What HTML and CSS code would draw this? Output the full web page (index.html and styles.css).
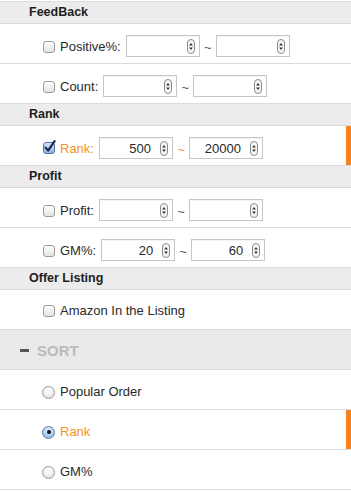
FILE: index.html
```html
<!DOCTYPE html>
<html>
<head>
<meta charset="utf-8">
<link rel="stylesheet" href="styles.css">
</head>
<body>
<div class="panel">
  <div class="sec-head">FeedBack</div>
  <div class="row has-inputs">
    <span class="cb"></span><span class="lbl">Positive%:</span>
    <div class="range">
      <div class="num"><span class="val"></span><span class="spin"><svg viewBox="0 0 8 15" width="8" height="15"><rect x="0.5" y="0.5" width="7" height="14" rx="3.5" fill="#f6f6f6" stroke="#8a8a8a"/><path d="M2.1 6.4H5.9L4 3.9Z M2.1 8.6H5.9L4 11.1Z" fill="#333"/></svg></span></div>
      <span class="tilde">~</span>
      <div class="num"><span class="val"></span><span class="spin"><svg viewBox="0 0 8 15" width="8" height="15"><rect x="0.5" y="0.5" width="7" height="14" rx="3.5" fill="#f6f6f6" stroke="#8a8a8a"/><path d="M2.1 6.4H5.9L4 3.9Z M2.1 8.6H5.9L4 11.1Z" fill="#333"/></svg></span></div>
    </div>
  </div>
  <div class="row has-inputs">
    <span class="cb"></span><span class="lbl">Count:</span>
    <div class="range">
      <div class="num"><span class="val"></span><span class="spin"><svg viewBox="0 0 8 15" width="8" height="15"><rect x="0.5" y="0.5" width="7" height="14" rx="3.5" fill="#f6f6f6" stroke="#8a8a8a"/><path d="M2.1 6.4H5.9L4 3.9Z M2.1 8.6H5.9L4 11.1Z" fill="#333"/></svg></span></div>
      <span class="tilde">~</span>
      <div class="num"><span class="val"></span><span class="spin"><svg viewBox="0 0 8 15" width="8" height="15"><rect x="0.5" y="0.5" width="7" height="14" rx="3.5" fill="#f6f6f6" stroke="#8a8a8a"/><path d="M2.1 6.4H5.9L4 3.9Z M2.1 8.6H5.9L4 11.1Z" fill="#333"/></svg></span></div>
    </div>
  </div>

  <div class="sec-head">Rank</div>
  <div class="row has-inputs active">
    <span class="cb checked"><svg viewBox="0 0 14 14" width="14" height="14"><defs><linearGradient id="cbg" x1="0" y1="0" x2="0" y2="1"><stop offset="0" stop-color="#d9e6f7"/><stop offset="1" stop-color="#8fb3e3"/></linearGradient></defs><rect x="1.5" y="2.5" width="11" height="11" rx="2.5" fill="url(#cbg)" stroke="#56719b"/><path d="M3.6 7.6L6.1 10.6L12.6 1.2" fill="none" stroke="#1b2a5c" stroke-width="2.2" stroke-linecap="round" stroke-linejoin="round"/></svg></span><span class="lbl">Rank:</span>
    <div class="range">
      <div class="num"><span class="val">500</span><span class="spin"><svg viewBox="0 0 8 15" width="8" height="15"><rect x="0.5" y="0.5" width="7" height="14" rx="3.5" fill="#f6f6f6" stroke="#8a8a8a"/><path d="M2.1 6.4H5.9L4 3.9Z M2.1 8.6H5.9L4 11.1Z" fill="#333"/></svg></span></div>
      <span class="tilde">~</span>
      <div class="num"><span class="val">20000</span><span class="spin"><svg viewBox="0 0 8 15" width="8" height="15"><rect x="0.5" y="0.5" width="7" height="14" rx="3.5" fill="#f6f6f6" stroke="#8a8a8a"/><path d="M2.1 6.4H5.9L4 3.9Z M2.1 8.6H5.9L4 11.1Z" fill="#333"/></svg></span></div>
    </div>
  </div>

  <div class="sec-head">Profit</div>
  <div class="row has-inputs">
    <span class="cb"></span><span class="lbl">Profit:</span>
    <div class="range">
      <div class="num"><span class="val"></span><span class="spin"><svg viewBox="0 0 8 15" width="8" height="15"><rect x="0.5" y="0.5" width="7" height="14" rx="3.5" fill="#f6f6f6" stroke="#8a8a8a"/><path d="M2.1 6.4H5.9L4 3.9Z M2.1 8.6H5.9L4 11.1Z" fill="#333"/></svg></span></div>
      <span class="tilde">~</span>
      <div class="num"><span class="val"></span><span class="spin"><svg viewBox="0 0 8 15" width="8" height="15"><rect x="0.5" y="0.5" width="7" height="14" rx="3.5" fill="#f6f6f6" stroke="#8a8a8a"/><path d="M2.1 6.4H5.9L4 3.9Z M2.1 8.6H5.9L4 11.1Z" fill="#333"/></svg></span></div>
    </div>
  </div>
  <div class="row has-inputs">
    <span class="cb"></span><span class="lbl">GM%:</span>
    <div class="range">
      <div class="num"><span class="val">20</span><span class="spin"><svg viewBox="0 0 8 15" width="8" height="15"><rect x="0.5" y="0.5" width="7" height="14" rx="3.5" fill="#f6f6f6" stroke="#8a8a8a"/><path d="M2.1 6.4H5.9L4 3.9Z M2.1 8.6H5.9L4 11.1Z" fill="#333"/></svg></span></div>
      <span class="tilde">~</span>
      <div class="num"><span class="val">60</span><span class="spin"><svg viewBox="0 0 8 15" width="8" height="15"><rect x="0.5" y="0.5" width="7" height="14" rx="3.5" fill="#f6f6f6" stroke="#8a8a8a"/><path d="M2.1 6.4H5.9L4 3.9Z M2.1 8.6H5.9L4 11.1Z" fill="#333"/></svg></span></div>
    </div>
  </div>

  <div class="sec-head">Offer Listing</div>
  <div class="row plain">
    <span class="cb"></span><span class="lbl">Amazon In the Listing</span>
  </div>

  <div class="sort-head"><span class="minus"></span><span class="sort-title">SORT</span></div>
  <div class="row radio-row">
    <span class="radio"></span><span class="lbl">Popular Order</span>
  </div>
  <div class="row radio-row active">
    <span class="radio on"></span><span class="lbl">Rank</span>
  </div>
  <div class="row radio-row">
    <span class="radio"></span><span class="lbl">GM%</span>
  </div>
</div>
</body>
</html>
```

FILE: styles.css
```css
html, body {
  margin: 0;
  padding: 0;
  background: #ffffff;
}
body {
  font-family: "Liberation Sans", Arial, Helvetica, sans-serif;
  font-size: 13px;
  color: #2a2a2a;
  width: 351px;
}
.panel {
  margin-top: 1px;
  border-top: 1px solid #dcdcdc;
}
.sec-head {
  height: 21px;
  line-height: 21px;
  background: #ececec;
  border-bottom: 1px solid #d9d9d9;
  padding-left: 29px;
  font-weight: bold;
  font-size: 12.5px;
  color: #1e1e1e;
}
.row {
  height: 39px;
  box-sizing: content-box;
  border-bottom: 1px solid #dcdcdc;
  display: flex;
  align-items: center;
  padding-left: 43px;
  padding-top: 0;
  background: #fff;
}
.row > * { flex: none; }
.row.has-inputs {
  height: 34px;
  padding-top: 5px;
}
.row.plain {
  height: 38px;
  padding-top: 1px;
}
.row.radio-row {
  height: 36px;
  padding-top: 3px;
}
.row.active {
  box-shadow: inset -5px 0 0 #f6831f;
}
.row.active .lbl,
.row.active .tilde {
  color: #f7931e;
}
.lbl {
  margin-left: 5px;
  white-space: nowrap;
}
.cb {
  width: 12px;
  height: 12px;
  box-sizing: border-box;
  border: 1px solid #9b9b9b;
  border-radius: 3px;
  background: linear-gradient(#ffffff, #e2e2e2);
  box-shadow: inset 0 1px 1px rgba(255,255,255,0.8);
  position: relative;
  top: 1px;
}
.cb.checked {
  border: none;
  background: none;
  box-shadow: none;
  top: 0;
}
.cb.checked svg {
  position: absolute;
  left: -1px;
  top: -2px;
}
.radio {
  width: 13px;
  height: 13px;
  box-sizing: border-box;
  border: 1px solid #9a9a9a;
  border-radius: 50%;
  background: radial-gradient(circle at 50% 30%, #ffffff 0%, #f2f2f2 45%, #d3d3d3 100%);
  position: relative;
  top: 1px;
  margin-left: -1px;
}
.radio.on {
  border-color: #5d7fb1;
  background: radial-gradient(circle at 50% 30%, #e3eefb 0%, #b5cff0 50%, #77a6e0 100%);
}
.radio.on::after {
  content: "";
  position: absolute;
  left: 3.5px;
  top: 3.5px;
  width: 4px;
  height: 4px;
  border-radius: 50%;
  background: #111;
}
.range {
  display: flex;
  align-items: center;
  margin-left: 5px;
}
.num {
  width: 74px;
  height: 22px;
  box-sizing: border-box;
  border: 1px solid #c6c6c6;
  background: #fff;
  box-shadow: inset 0 1px 1px rgba(0,0,0,0.05);
  display: flex;
  align-items: center;
  justify-content: flex-end;
  padding-right: 4px;
}
.val {
  margin-right: 9px;
  color: #2a2a2a;
  font-size: 13px;
}
.spin {
  display: flex;
  width: 8px;
  height: 15px;
}
.tilde {
  width: 16px;
  text-align: center;
  color: #555;
  font-size: 13px;
  position: relative;
  top: 1px;
}
.sort-head {
  background: #eaeaea;
  border-bottom: 1px solid #dcdcdc;
  display: flex;
  align-items: center;
  padding-left: 20px;
  padding-top: 1px;
  box-sizing: content-box;
  height: 38px;
}
.minus {
  width: 9px;
  height: 3px;
  background: #555;
  margin-right: 8px;
}
.sort-title {
  font-weight: bold;
  font-size: 15px;
  color: #bbbbbb;
}
```
